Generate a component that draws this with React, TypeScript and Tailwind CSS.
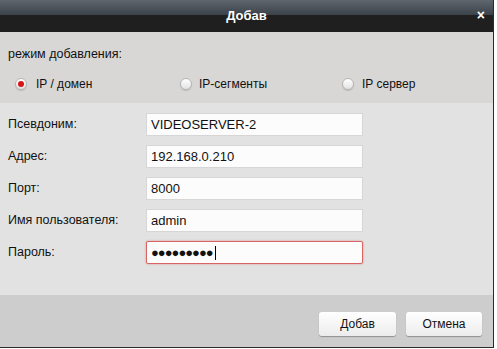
import React from "react";

const Radio = ({ checked }: { checked?: boolean }) => (
    <span className="flex h-[12px] w-[12px] items-center justify-center rounded-full border border-[#b5b5b5] bg-gradient-to-b from-[#ffffff] to-[#e2e2e2] shadow-[0_1px_1px_rgba(0,0,0,0.15)]">
        {checked && <span className="h-[6px] w-[6px] rounded-full bg-[#d8141a]" />}
    </span>
);

const fields = [
    { label: "Псевдоним:", value: "VIDEOSERVER-2" },
    { label: "Адрес:", value: "192.168.0.210" },
    { label: "Порт:", value: "8000" },
    { label: "Имя пользователя:", value: "admin" },
];

export default function App() {
    return (
        <div className="h-[349px] w-[497px] bg-white font-['Liberation_Sans',Arial,sans-serif] text-[12px] text-[#111]">
            <div className="flex h-[348px] w-[494px] flex-col border-r border-b border-[#2a2a2a]">
                {/* title bar */}
                <div className="relative h-[32px] shrink-0">
                    <div className="h-[15px] bg-gradient-to-b from-[#5f666e] to-[#3c424a]" />
                    <div className="h-[17px] bg-[#1f1f1f]" />
                    <div className="absolute inset-0 flex items-center justify-center text-[13px] font-bold text-white">
                        Добав
                    </div>
                    <div className="absolute right-[8px] top-[8px] text-[14px] font-bold leading-none text-white">
                        ×
                    </div>
                </div>

                {/* mode */}
                <div className="h-[71px] shrink-0 bg-[#d8d7d5] px-[8px] pt-[15px]">
                    <div className="text-[12.5px] leading-[14px]">режим добавления:</div>
                    <div className="mt-[14px] flex items-center">
                        <div className="flex w-[172px] items-center gap-[9px] pl-[7px]">
                            <Radio checked />
                            <span>IP / домен</span>
                        </div>
                        <div className="flex w-[162px] items-center gap-[7px]">
                            <Radio />
                            <span>IP-сегменты</span>
                        </div>
                        <div className="flex items-center gap-[8px]">
                            <Radio />
                            <span>IP сервер</span>
                        </div>
                    </div>
                </div>

                {/* fields */}
                <div className="flex flex-1 flex-col gap-[9px] bg-[#e2e2e2] px-[8px] pt-[10px]">
                    {fields.map((f) => (
                        <div key={f.label} className="flex items-center">
                            <span className="w-[138px] text-[12.5px]">{f.label}</span>
                            <div className="flex h-[23px] w-[217px] items-center border border-[#d6d6d6] bg-[#fcfcfc] px-[4px] text-[13px]">
                                {f.value}
                            </div>
                        </div>
                    ))}
                    <div className="flex items-center">
                        <span className="w-[138px] text-[12.5px]">Пароль:</span>
                        <div className="flex h-[23px] w-[217px] items-center rounded-[2px] border border-[#d86464] bg-[#fcfcfc] px-[4px] shadow-[0_0_2px_rgba(220,80,80,0.6)]">
                            <span className="text-[13px] font-bold tracking-[-1px]">●●●●●●●●●</span>
                            <span className="ml-[2px] h-[14px] w-[1px] bg-black" />
                        </div>
                    </div>
                </div>

                {/* footer */}
                <div className="flex h-[52px] shrink-0 items-start justify-end gap-[10px] bg-[#cdcdcd] pr-[11px] pt-[17px]">
                    <button className="h-[24px] w-[77px] rounded-[3px] bg-gradient-to-b from-[#ffffff] to-[#ececec] shadow-[0_1px_1px_rgba(0,0,0,0.3)]">
                        Добав
                    </button>
                    <button className="h-[24px] w-[76px] rounded-[3px] bg-gradient-to-b from-[#ffffff] to-[#ececec] shadow-[0_1px_1px_rgba(0,0,0,0.3)]">
                        Отмена
                    </button>
                </div>
            </div>
        </div>
    );
}
